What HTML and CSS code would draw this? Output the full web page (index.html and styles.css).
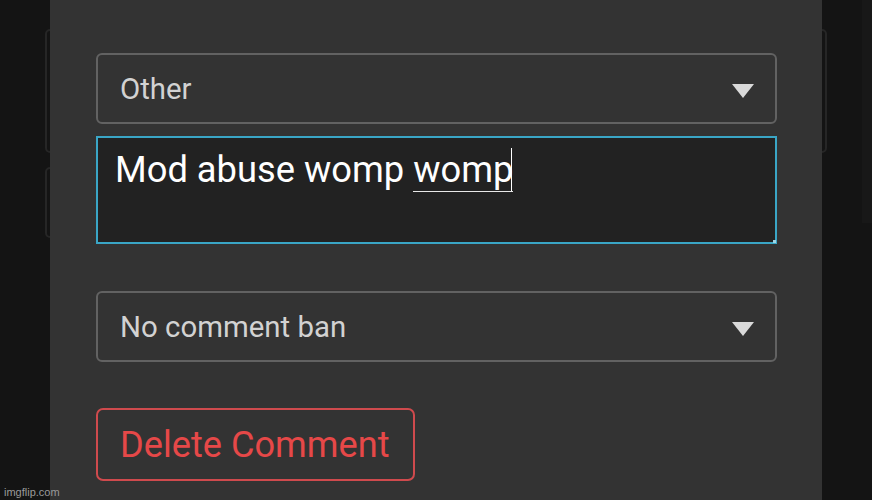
FILE: index.html
```html
<!DOCTYPE html>
<html lang="en">
<head>
  <meta charset="UTF-8">
  <meta name="viewport" content="width=device-width, initial-scale=1.0">
  <title>Report Comment</title>
  <link rel="stylesheet" href="styles.css">
</head>
<body>
  <div class="page">
    <div class="bg-card"></div>
    <div class="bg-card bg-card-small"></div>
  </div>
  <div class="scroll-track"></div>

  <div class="modal">
    <div class="select-box">
      <span class="select-value">Other</span>
      <span class="select-arrow"></span>
    </div>

    <div class="text-input">Mod abuse womp <span class="composing">womp</span><span class="caret"></span></div>

    <div class="select-box select-ban">
      <span class="select-value">No comment ban</span>
      <span class="select-arrow"></span>
    </div>

    <button class="delete-button">Delete Comment</button>
  </div>

  <div class="watermark">imgflip.com</div>
</body>
</html>
```

FILE: styles.css
```css
:root {
  --page-bg: #141414;
  --modal-bg: #333333;
  --field-border: #626262;
  --field-text: #d2d2d2;
  --focus-blue: #3aa6c6;
  --danger: #e64848;
}

html, body {
  margin: 0;
  height: 100%;
}

body {
  width: 872px;
  height: 500px;
  overflow: hidden;
  background-color: var(--page-bg);
  font-family: Roboto, "Liberation Sans", sans-serif;
  display: flex;
  align-items: flex-start;
}

.page {
  width: 862px;
  box-sizing: border-box;
  padding: 29px 35px 0 45px;
}

.bg-card {
  height: 124px;
  border: 2px solid #262626;
  border-radius: 5px;
  box-sizing: border-box;
}

.bg-card-small {
  width: 320px;
  height: 71px;
  margin-top: 14px;
}

.scroll-track {
  width: 10px;
  height: 223px;
  background: #181818;
}

.modal {
  position: absolute;
  left: 50px;
  top: 0;
  width: 772px;
  height: 500px;
  box-sizing: border-box;
  background: var(--modal-bg);
  padding: 53px 45px 0 46px;
  display: flex;
  flex-direction: column;
  align-items: flex-start;
}

.select-box {
  width: 100%;
  height: 71px;
  box-sizing: border-box;
  border: 2px solid var(--field-border);
  border-radius: 6px;
  display: flex;
  align-items: center;
  justify-content: space-between;
  padding: 0 21px 0 22px;
}

.select-value {
  font-size: 29.4px;
  color: var(--field-text);
}

.select-arrow {
  width: 0;
  height: 0;
  border-left: 11.5px solid transparent;
  border-right: 11.5px solid transparent;
  border-top: 14px solid #dadada;
  margin-top: 4px;
}

.text-input {
  position: relative;
  width: 100%;
  height: 108px;
  margin-top: 12px;
  box-sizing: border-box;
  border: 2px solid var(--focus-blue);
  background: #222222;
  padding: 10px 17px;
  font-size: 36.3px;
  color: #ffffff;
}

.text-input::after {
  content: "";
  position: absolute;
  right: -1px;
  bottom: -1px;
  width: 3px;
  height: 3px;
  background: #9fd6e6;
}

.composing {
  border-bottom: 1.5px solid #e8e8e8;
}

.caret {
  display: inline-block;
  width: 1px;
  height: 43px;
  background: #ffffff;
  vertical-align: top;
  margin-left: -2px;
}

.select-ban {
  margin-top: 47px;
}

.delete-button {
  margin-top: 46px;
  width: 319px;
  height: 73px;
  box-sizing: border-box;
  background: transparent;
  border: 2px solid #cf4a4d;
  border-radius: 7px;
  color: var(--danger);
  font-family: Roboto, "Liberation Sans", sans-serif;
  font-size: 36.2px;
  text-align: left;
  padding: 0 0 0 22px;
}

.watermark {
  position: absolute;
  left: 4px;
  bottom: 2px;
  font-family: "Liberation Sans", Arial, sans-serif;
  font-size: 11px;
  color: #9a9a9a;
}
```
